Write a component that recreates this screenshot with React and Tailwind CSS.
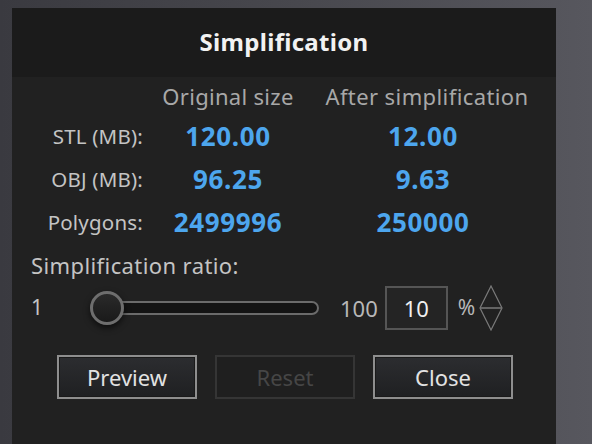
import React from "react";

const font = { fontFamily: '"Noto Sans", "Open Sans", sans-serif' };

function Row({ label, a, b }) {
  return (
    <div className="grid grid-cols-[131px_170px_224px] h-[43px] items-center">
      <div className="text-right pr-0 text-[20.5px] text-[#c4c4c4] tracking-[0.2px]">{label}</div>
      <div className="text-center text-[26px] font-bold text-[#4da6ee] tracking-[0.6px]">{a}</div>
      <div className="text-center text-[26px] font-bold text-[#4da6ee] tracking-[0.6px] pr-[4px]">{b}</div>
    </div>
  );
}

function Btn({ children, disabled }) {
  return (
    <button
      className={
        disabled
          ? "w-[140px] h-[44px] border-2 border-[#353535] bg-[#1f1f1f] text-[#464646] text-[22px]"
          : "w-[140px] h-[44px] border-2 border-[#8e8e8e] bg-gradient-to-b from-[#2c2d30] to-[#1f2022] text-[#e2e2e2] text-[22px] shadow-[inset_0_0_0_1px_#1a1a1a]"
      }
      style={font}
    >
      {children}
    </button>
  );
}

export default function App() {
  return (
    <div
      className="w-[592px] h-[444px] overflow-hidden bg-gradient-to-r from-[#3a3a40] via-[#48484e] to-[#57575e] pt-[8px] pl-[12px]"
      style={font}
    >
      <div className="w-[544px] h-[436px] bg-[#212121] flex flex-col">
        <div className="h-[69px] bg-[#1b1b1b] flex items-center justify-center pb-[2px]">
          <span className="text-[24px] font-bold text-[#f2f2f2] tracking-[0.3px]">Simplification</span>
        </div>
        <div className="grid grid-cols-[131px_170px_224px] h-[38px] items-center">
          <div></div>
          <div className="text-center text-[22px] text-[#a8a8a8] tracking-[0.3px]">Original size</div>
          <div className="text-center text-[22px] text-[#a8a8a8] tracking-[0.4px] pl-[4px]">After simplification</div>
        </div>
        <Row label="STL (MB):" a="120.00" b="12.00" />
        <Row label="OBJ (MB):" a="96.25" b="9.63" />
        <Row label="Polygons:" a="2499996" b="250000" />
        <div className="h-[42px] flex items-center pl-[19px] text-[22px] text-[#c4c4c4] tracking-[0.4px]">
          Simplification ratio:
        </div>
        <div className="h-[44px] flex items-center">
          <div className="w-[76px] pl-[19px] text-[21px] text-[#c4c4c4]">1</div>
          <div className="relative w-[233px] h-[36px] flex items-center">
            <div className="ml-[18px] w-[213px] h-[14px] rounded-full border-2 border-[#6b6b6b] bg-[#141414]"></div>
            <div className="absolute left-[2px] top-[1px] w-[34px] h-[34px] rounded-full border-[3px] border-[#6e6e6e] bg-gradient-to-b from-[#2a2a2a] to-[#1a1a1a] shadow-[0_3px_6px_rgba(0,0,0,0.6)]"></div>
          </div>
          <div className="ml-[19px] text-[22px] text-[#b8b8b8]">100</div>
          <div className="ml-[7px] w-[63px] h-[44px] border-2 border-[#555] bg-[#242424] flex items-center justify-center text-[22px] text-[#f0f0f0]">
            10
          </div>
          <div className="ml-[10px] text-[21px] text-[#b8b8b8]">%</div>
          <svg width="24" height="46" viewBox="0 0 24 46" className="ml-[4px]">
            <path d="M12 1 L23 23 L12 45 L1 23 Z" fill="none" stroke="#7a7a7a" strokeWidth="1.2" />
            <path d="M1.5 23 L22.5 23" stroke="#7a7a7a" strokeWidth="1.5" />
          </svg>
        </div>
        <div className="flex gap-[18px] pl-[45px] mt-[25px]">
          <Btn>Preview</Btn>
          <Btn disabled>Reset</Btn>
          <Btn>Close</Btn>
        </div>
      </div>
    </div>
  );
}
